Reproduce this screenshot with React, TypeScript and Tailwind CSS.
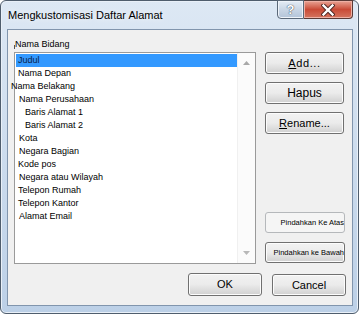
import React from 'react';

const fields: { label: string; indent: string; selected?: boolean }[] = [
  { label: 'Judul', indent: 'pl-[2px]', selected: true },
  { label: 'Nama Depan', indent: 'pl-[2px]' },
  { label: 'Nama Belakang', indent: 'ml-[-5px]' },
  { label: 'Nama Perusahaan', indent: 'pl-[3px]' },
  { label: 'Baris Alamat 1', indent: 'pl-[9px]' },
  { label: 'Baris Alamat 2', indent: 'pl-[9px]' },
  { label: 'Kota', indent: 'pl-[3px]' },
  { label: 'Negara Bagian', indent: 'pl-[3px]' },
  { label: 'Kode pos', indent: 'pl-[2px]' },
  { label: 'Negara atau Wilayah', indent: 'pl-[3px]' },
  { label: 'Telepon Rumah', indent: 'pl-[2px]' },
  { label: 'Telepon Kantor', indent: 'pl-[2px]' },
  { label: 'Alamat Email', indent: 'pl-[3px]' },
];

// tombol gaya Windows 7
const btn =
  'flex items-center justify-center rounded-[3px] border border-[#707070] bg-linear-to-b from-[#f2f2f2] via-[#ebebeb] to-[#d0d0d0] shadow-[inset_0_0_0_1px_#fcfcfc] text-black';

const App: React.FC = () => {
  return (
    <div className="w-[359px] h-[314px] overflow-hidden bg-white font-['Liberation_Sans',Arial,sans-serif]">
      <div className="w-[359px] h-[314px] flex flex-col rounded-[6px] border border-[#4f5d6d] bg-linear-to-b from-[#dde8f4] to-[#bcd0e7] shadow-[inset_0_0_0_1px_#e9f0f8]">
        {/* Title bar */}
        <div className="h-[28px] flex items-start justify-between">
          <span className="pl-[7px] pt-[8px] text-[11px] leading-[13px] text-black [text-shadow:0_0_6px_#ffffff]">
            Mengkustomisasi Daftar Alamat
          </span>
          <div className="flex mr-[5px] -mt-px">
            <div className="w-[27px] h-[19px] flex items-center justify-center rounded-bl-[4px] border border-[#5a6878] bg-linear-to-b from-[#e4ecf5] via-[#c9d6e5] to-[#b3c4d8] shadow-[inset_0_0_0_1px_#eef3f9]">
              <span className="text-[13px] leading-[13px] font-bold text-white [text-shadow:0_0_1px_#3a4654,0_0_1px_#3a4654]">?</span>
            </div>
            <div className="w-[49px] h-[19px] flex items-center justify-center rounded-br-[4px] border border-l-0 border-[#5a3a36] bg-linear-to-b from-[#e8a294] via-[#c94a36] to-[#d4745f] shadow-[inset_0_0_0_1px_#eeb0a4]">
              <svg width="14" height="12" viewBox="0 0 14 12">
                <path d="M2.5 1.5 L11.5 10.5 M11.5 1.5 L2.5 10.5" stroke="#4a2420" strokeWidth="4.2" strokeLinecap="square" />
                <path d="M2.5 1.5 L11.5 10.5 M11.5 1.5 L2.5 10.5" stroke="#ffffff" strokeWidth="2.4" strokeLinecap="square" />
              </svg>
            </div>
          </div>
        </div>

        {/* Client area */}
        <div className="ml-[6px] w-[346px] h-[277px] border border-[#8195ad] bg-[#f0f0f0] flex flex-col">
          <div className="flex pt-[9px]">
            {/* Field list */}
            <div className="flex flex-col ml-[6px]">
              <div className="flex items-end h-[11px]">
                <span className="w-px h-[4px] bg-[#555] mb-[1px]" />
                <span className="text-[9px] leading-[11px] text-black">Nama Bidang</span>
              </div>
              <div className="mt-[2px] w-[242px] h-[212px] border border-[#9a9a9a] bg-white flex">
                <div className="flex-1 pl-px pt-px">
                  {fields.map((f) => (
                    <div
                      key={f.label}
                      className={`h-[13px] flex items-center whitespace-nowrap text-[9px] leading-[13px] ${
                        f.selected ? 'bg-[#3399ff] text-[#0b2348]' : 'text-black'
                      }`}
                    >
                      <span className={f.indent}>{f.label}</span>
                    </div>
                  ))}
                </div>
                <div className="w-[18px] border-l border-[#f0f0f0] bg-[#fbfbfb] flex flex-col justify-between items-center py-[8px]">
                  <svg width="7" height="4" viewBox="0 0 7 4">
                    <path d="M0 4 L3.5 0 L7 4 Z" fill="#a8a8a8" />
                  </svg>
                  <svg width="7" height="4" viewBox="0 0 7 4">
                    <path d="M0 0 L3.5 4 L7 0 Z" fill="#b8b8b8" />
                  </svg>
                </div>
              </div>
            </div>

            {/* Right buttons */}
            <div className="ml-[9px] w-[79px] flex flex-col pt-[13px] pb-[1px]">
              <div className="flex flex-col gap-[8px]">
                <div className={`${btn} h-[22px] text-[11px] tracking-[0.6px]`}>
                  <span><span className="underline">A</span>dd...</span>
                </div>
                <div className={`${btn} h-[22px] text-[12px]`}>Hapus</div>
                <div className={`${btn} h-[22px] text-[11px]`}>
                  <span><span className="underline">R</span>ename...</span>
                </div>
              </div>
              <div className="mt-auto flex flex-col gap-[9px]">
                <div className="h-[21px] w-[80px] flex items-center justify-end overflow-hidden rounded-[3px] border border-[#b5b8bb] bg-[#f5f5f5]">
                  <span className="whitespace-nowrap text-[7.5px] text-black">Pindahkan Ke Atas</span>
                </div>
                <div className={`${btn} h-[21px] w-[80px] justify-end overflow-hidden`}>
                  <span className="whitespace-nowrap text-[7.5px]">Pindahkan ke Bawah</span>
                </div>
              </div>
            </div>
          </div>

          {/* OK / Cancel */}
          <div className="mt-[9px] flex justify-end gap-[10px] pr-[6px]">
            <div className={`${btn} w-[74px] h-[23px] text-[11px] border-[#3c7fb1] shadow-[inset_0_0_0_1px_#9fdcf8,inset_0_0_0_2px_#e3f4fc]`}>OK</div>
            <div className={`${btn} w-[74px] h-[22px] mt-px text-[11px]`}>Cancel</div>
          </div>
        </div>
      </div>
    </div>
  );
};

export default App;
